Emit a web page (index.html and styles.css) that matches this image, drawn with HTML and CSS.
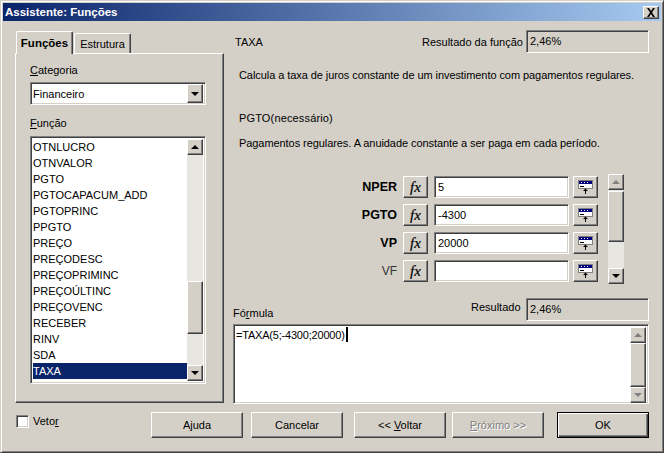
FILE: index.html
```html
<!DOCTYPE html>
<html lang="pt">
<head>
  <meta charset="UTF-8" />
  <title>Assistente: Funções</title>
  <link rel="stylesheet" href="styles.css">
</head>
<body>
  <svg class="defs" width="0" height="0">
    <symbol id="ref" viewBox="0 0 15 14">
      <rect x="0" y="0" width="15" height="9" fill="#808080" />
      <rect x="1" y="1" width="13" height="3" fill="#000080" />
      <rect x="1" y="4" width="13" height="4" fill="#fff" />
      <path d="M3 2h1v1H3zM6 2h1v1H6zM9 2h1v1H9z" fill="#fff" />
      <path d="M2 6h4v1H2z" fill="#000" />
      <path d="M7 14v-3H5l2.500-2.500L10 11H8v3z" fill="#000" />
    </symbol>
  </svg>

  <div class="window">
    <div class="titlebar">
      <span class="title">Assistente: Funções</span>
      <span class="close raised">
        <svg width="10" height="9" viewBox="0 0 10 9"><path d="M1 0h2l2 3 2-3h2L6 4.500 9 9H7L5 6 3 9H1l3-4.500z" fill="#000" /></svg>
      </span>
    </div>

    <div class="main">
      <div class="left">
        <div class="tabs">
          <div class="tab tab-active">Funções</div>
          <div class="tab">Estrutura</div>
        </div>
        <div class="panel">
          <label class="field-label first"><u>C</u>ategoria</label>
          <div class="select sunken">
            <span class="select-text">Financeiro</span>
            <span class="sb-btn raised"><i class="arrow down"></i></span>
          </div>
          <label class="field-label second"><u>F</u>unção</label>
          <div class="listbox sunken">
            <ul class="items">
              <li>OTNLUCRO</li>
              <li>OTNVALOR</li>
              <li>PGTO</li>
              <li>PGTOCAPACUM_ADD</li>
              <li>PGTOPRINC</li>
              <li>PPGTO</li>
              <li>PREÇO</li>
              <li>PREÇODESC</li>
              <li>PREÇOPRIMINC</li>
              <li>PREÇOÚLTINC</li>
              <li>PREÇOVENC</li>
              <li>RECEBER</li>
              <li>RINV</li>
              <li>SDA</li>
              <li class="selected">TAXA</li>
              <li>TAXA.EFETIVA</li>
            </ul>
            <div class="scrollbar">
              <span class="sb-btn raised"><i class="arrow up"></i></span>
              <span class="sb-gap gap-list"></span>
              <span class="sb-thumb raised thumb-list"></span>
              <span class="sb-gap sb-fill"></span>
              <span class="sb-btn raised"><i class="arrow down"></i></span>
            </div>
          </div>
        </div>
      </div>

      <div class="right">
        <div class="head-row">
          <span class="func-name">TAXA</span>
          <span class="result-label">Resultado da função</span>
          <span class="result-box sunken">2,46%</span>
        </div>
        <p class="desc desc-main">Calcula a taxa de juros constante de um investimento com pagamentos regulares.</p>
        <p class="desc desc-arg">PGTO(necessário)</p>
        <p class="desc desc-help">Pagamentos regulares. A anuidade constante a ser paga em cada período.</p>

        <div class="args">
          <div class="arg-rows">
            <div class="arg-row">
              <span class="arg-name req">NPER</span>
              <span class="fx raised">fx</span>
              <span class="arg-input sunken">5</span>
              <span class="ref raised"><svg width="15" height="14"><use href="#ref" /></svg></span>
            </div>
            <div class="arg-row">
              <span class="arg-name req">PGTO</span>
              <span class="fx raised">fx</span>
              <span class="arg-input sunken">-4300</span>
              <span class="ref raised"><svg width="15" height="14"><use href="#ref" /></svg></span>
            </div>
            <div class="arg-row">
              <span class="arg-name req">VP</span>
              <span class="fx raised">fx</span>
              <span class="arg-input sunken">20000</span>
              <span class="ref raised"><svg width="15" height="14"><use href="#ref" /></svg></span>
            </div>
            <div class="arg-row">
              <span class="arg-name">VF</span>
              <span class="fx raised">fx</span>
              <span class="arg-input sunken"></span>
              <span class="ref raised"><svg width="15" height="14"><use href="#ref" /></svg></span>
            </div>
          </div>
          <div class="scrollbar args-scroll">
            <span class="sb-btn raised"><i class="arrow up off"></i></span>
            <span class="sb-thumb raised thumb-args"></span>
            <span class="sb-gap sb-fill"></span>
            <span class="sb-btn raised"><i class="arrow down"></i></span>
          </div>
        </div>

        <div class="formula-head">
          <span class="formula-label">Fó<u>r</u>mula</span>
          <span class="result-label small">Resultado</span>
          <span class="result-box sunken">2,46%</span>
        </div>
        <div class="editor sunken">
          <div class="editor-text">=TAXA(5;-4300;20000)<i class="caret"></i></div>
          <div class="scrollbar editor-scroll">
            <span class="sb-btn raised"><i class="arrow up off"></i></span>
            <span class="sb-thumb raised sb-fill"></span>
            <span class="sb-btn raised"><i class="arrow down off"></i></span>
          </div>
        </div>
      </div>
    </div>

    <div class="footer">
      <label class="check"><span class="checkbox sunken"></span><span>Veto<u>r</u></span></label>
      <div class="buttons">
        <button class="btn raised">A<u>j</u>uda</button>
        <button class="btn raised">Cancelar</button>
        <button class="btn raised gap-l">&lt;&lt; <u>V</u>oltar</button>
        <button class="btn raised gap-s off"><u>P</u>róximo &gt;&gt;</button>
        <button class="btn raised default">OK</button>
      </div>
    </div>
  </div>
</body>
</html>
```

FILE: styles.css
```css
html, body {
  margin: 0;
  padding: 0;
}
body {
  font-family: "Liberation Sans", Arial, sans-serif;
  font-size: 11px;
  color: #000;
  background-color: #d4d0c8;
  overflow: hidden;
}
.defs {
  position: absolute;
}
p, ul {
  margin: 0;
  padding: 0;
}

/* bevels */
.raised {
  box-sizing: border-box;
  background-color: #d4d0c8;
  border: 1px solid;
  border-color: #fff #404040 #404040 #fff;
  box-shadow: inset -1px -1px 0 #808080;
}
.sunken {
  box-sizing: border-box;
  border: 1px solid;
  border-color: #808080 #fff #fff #808080;
  box-shadow: inset 1px 1px 0 #404040, inset -1px -1px 0 #d4d0c8;
}

.window {
  box-sizing: border-box;
  width: 664px;
  height: 453px;
  padding: 2px;
  border: 1px solid;
  border-color: #d4d0c8 #404040 #404040 #d4d0c8;
  box-shadow: inset 1px 1px 0 #fff, inset -1px -1px 0 #808080;
  overflow: hidden;
}
.titlebar {
  display: flex;
  align-items: center;
  justify-content: space-between;
  height: 18px;
  padding: 0 2px;
  background: linear-gradient(to right, #0a246a, #a6caf0);
  color: #fff;
  font-size: 11.500px;
  font-weight: bold;
}
.close {
  display: flex;
  align-items: center;
  justify-content: center;
  width: 16px;
  height: 13px;
}

.main {
  display: flex;
  gap: 9px;
  padding: 9px 0 0 12px;
  height: 382px;
  box-sizing: border-box;
}

/* left column */
.left {
  width: 209px;
  margin-top: 1px;
}
.tabs {
  display: flex;
  align-items: flex-end;
  height: 22px;
  padding-left: 1px;
  gap: 1px;
}
.tab {
  box-sizing: border-box;
  width: 57px;
  height: 20px;
  line-height: 20px;
  text-align: center;
  border: 1px solid;
  border-color: #fff #404040 transparent #fff;
  border-bottom: 0;
  border-radius: 2px 2px 0 0;
  box-shadow: inset -1px 0 0 #808080;
}
.tab-active {
  height: 23px;
  margin-bottom: -1px;
  position: relative;
  z-index: 1;
  background-color: #d4d0c8;
  font-size: 11.500px;
  font-weight: bold;
  line-height: 22px;
}
.panel {
  box-sizing: border-box;
  height: 350px;
  padding: 0 17px 0 14px;
  border: 1px solid;
  border-color: #fff #404040 #404040 #fff;
  box-shadow: inset -1px -1px 0 #808080;
}
.field-label {
  display: block;
  height: 15px;
  line-height: 15px;
}
.first {
  margin-top: 9px;
  margin-bottom: 4px;
}
.second {
  margin-top: 11px;
  margin-bottom: 5px;
}
.select {
  display: flex;
  justify-content: space-between;
  align-items: center;
  width: 176px;
  height: 23px;
  padding: 2px;
  background-color: #fff;
}
.select .sb-btn {
  height: 19px;
}
.listbox {
  display: flex;
  width: 176px;
  height: 248px;
  padding: 2px;
  background-color: #fff;
  overflow: hidden;
}
.items {
  flex: 1;
  list-style: none;
  overflow: hidden;
}
.items li {
  height: 16px;
  line-height: 16px;
  white-space: nowrap;
}
.items .selected {
  background-color: #0a246a;
  color: #fff;
}

/* scrollbars */
.scrollbar {
  display: flex;
  flex-direction: column;
  width: 16px;
  flex: none;
  background-color: #e8e6e1;
}
.sb-btn {
  display: flex;
  align-items: center;
  justify-content: center;
  flex: none;
  width: 16px;
  height: 16px;
}
.sb-thumb {
  display: block;
  flex: none;
}
.sb-gap {
  display: block;
}
.sb-fill {
  flex: 1;
}
.gap-list {
  height: 126px;
}
.thumb-list {
  height: 53px;
}
.thumb-args {
  height: 51px;
  margin-top: 1px;
}
.arrow {
  display: block;
  width: 0;
  height: 0;
  border-left: 4px solid transparent;
  border-right: 4px solid transparent;
}
.arrow.up {
  border-bottom: 4px solid #000;
}
.arrow.down {
  border-top: 4px solid #000;
}
.arrow.up.off {
  border-bottom-color: #808080;
}
.arrow.down.off {
  border-top-color: #808080;
}

/* right column */
.right {
  width: 416px;
}
.head-row {
  display: flex;
  align-items: center;
  height: 23px;
}
.func-name {
  width: 189px;
  padding-left: 2px;
  box-sizing: border-box;
}
.result-label {
  width: 104px;
  white-space: nowrap;
}
.result-box {
  width: 123px;
  height: 23px;
  line-height: 21px;
  padding-left: 3px;
}
.desc {
  height: 16px;
  line-height: 16px;
  padding-left: 6px;
  white-space: nowrap;
}
.desc-main {
  margin-top: 14px;
  letter-spacing: -0.07px;
}
.desc-arg {
  margin-top: 27px;
  letter-spacing: 0.15px;
}
.desc-help {
  margin-top: 9px;
  letter-spacing: -0.07px;
}

.args {
  display: flex;
  height: 110px;
  margin-top: 23px;
}
.arg-rows {
  display: flex;
  flex-direction: column;
  gap: 6px;
  padding-top: 2px;
  width: 375px;
}
.arg-row {
  display: flex;
  align-items: center;
  height: 22px;
}
.arg-name {
  width: 164px;
  text-align: right;
  margin-right: 6px;
  font-size: 12px;
  color: #333;
}
.arg-name.req {
  font-weight: bold;
  font-size: 12.500px;
  color: #000;
}
.fx {
  width: 25px;
  height: 22px;
  line-height: 20px;
  text-align: center;
  font-family: "Liberation Serif", serif;
  font-style: italic;
  font-size: 15px;
  -webkit-text-stroke: 0.2px #000;
  margin-right: 6px;
}
.arg-input {
  width: 135px;
  height: 22px;
  line-height: 20px;
  padding-left: 3px;
  background-color: #fff;
  margin-right: 4px;
}
.ref {
  display: flex;
  align-items: flex-start;
  justify-content: center;
  width: 25px;
  height: 22px;
  padding-top: 3px;
}
.args-scroll {
  height: 110px;
}

.formula-head {
  display: flex;
  align-items: center;
  height: 23px;
  margin-top: 14px;
}
.formula-label {
  width: 238px;
  padding-top: 6px;
}
.result-label.small {
  width: 55px;
  padding-bottom: 6px;
}
.editor {
  display: flex;
  height: 80px;
  margin-top: 3px;
  padding: 2px;
  background-color: #fff;
}
.editor-text {
  flex: 1;
  line-height: 16px;
  letter-spacing: -0.2px;
}
.caret {
  display: inline-block;
  width: 2px;
  height: 15px;
  margin-left: 1px;
  background-color: #000;
  vertical-align: top;
}
.editor-scroll {
  height: 76px;
}

/* bottom row */
.footer {
  display: flex;
  justify-content: space-between;
  align-items: center;
  padding: 9px 12px 0 13px;
}
.check {
  display: flex;
  align-items: center;
  gap: 4px;
  margin-bottom: 8px;
}
.checkbox {
  width: 13px;
  height: 13px;
  background-color: #fff;
}
.buttons {
  display: flex;
  gap: 8px;
}
.btn {
  width: 92px;
  height: 26px;
  padding: 0;
  font-family: inherit;
  font-size: 11px;
  color: #000;
}
.gap-l {
  margin-left: 3px;
}
.gap-s {
  margin-left: -2px;
}
.btn.off {
  color: #808080;
  text-shadow: 1px 1px 0 #fff;
}
.btn.default {
  margin-left: 5px;
  border-color: #000;
  box-shadow: inset 1px 1px 0 #fff, inset -1px -1px 0 #404040, inset -2px -2px 0 #808080;
}
```
